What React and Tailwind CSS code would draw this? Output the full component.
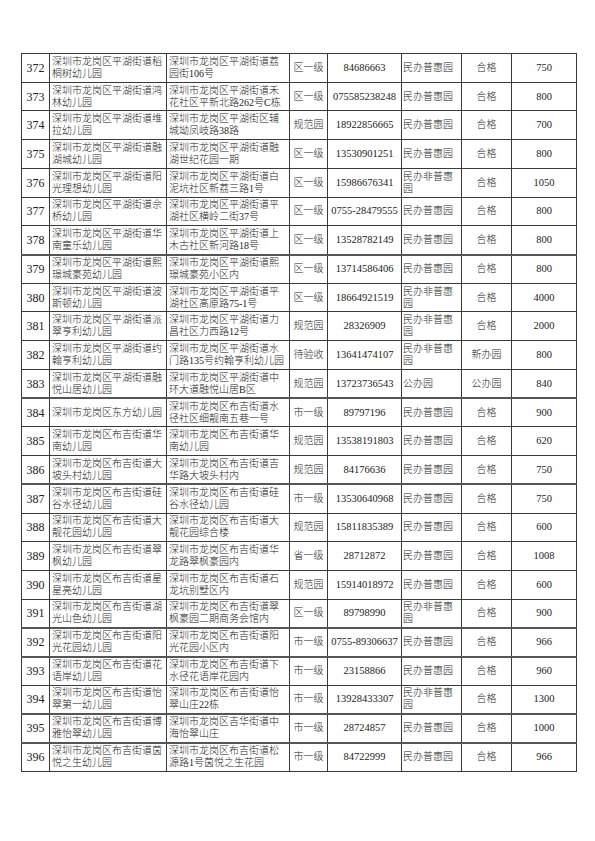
import React from "react";

const rows = [
  ["372", "深圳市龙岗区平湖街道稻桐树幼儿园", "深圳市龙岗区平湖街道荔园街106号", "区一级", "84686663", "民办普惠园", "合格", "750"],
  ["373", "深圳市龙岗区平湖街道鸿林幼儿园", "深圳市龙岗区平湖街道禾花社区平新北路262号C栋", "区一级", "075585238248", "民办普惠园", "合格", "800"],
  ["374", "深圳市龙岗区平湖街道维拉幼儿园", "深圳市龙岗区平湖街区辅城坳凤岐路38路", "规范园", "18922856665", "民办普惠园", "合格", "700"],
  ["375", "深圳市龙岗区平湖街道融湖城幼儿园", "深圳市龙岗区平湖街道融湖世纪花园一期", "区一级", "13530901251", "民办普惠园", "合格", "800"],
  ["376", "深圳市龙岗区平湖街道阳光理想幼儿园", "深圳市龙岗区平湖街道白泥坑社区新荔三路1号", "区一级", "15986676341", "民办非普惠园", "合格", "1050"],
  ["377", "深圳市龙岗区平湖街道佘桥幼儿园", "深圳市龙岗区平湖街道平湖社区横岭二街37号", "区一级", "0755-28479555", "民办普惠园", "合格", "800"],
  ["378", "深圳市龙岗区平湖街道华南童乐幼儿园", "深圳市龙岗区平湖街道上木古社区新河路18号", "区一级", "13528782149", "民办普惠园", "合格", "800"],
  ["379", "深圳市龙岗区平湖街道熙璟城豪苑幼儿园", "深圳市龙岗区平湖街道熙璟城豪苑小区内", "区一级", "13714586406", "民办普惠园", "合格", "800"],
  ["380", "深圳市龙岗区平湖街道波斯顿幼儿园", "深圳市龙岗区平湖街道平湖社区高原路75-1号", "区一级", "18664921519", "民办非普惠园", "合格", "4000"],
  ["381", "深圳市龙岗区平湖街道派翠亨利幼儿园", "深圳市龙岗区平湖街道力昌社区力西路12号", "规范园", "28326909", "民办非普惠园", "合格", "2000"],
  ["382", "深圳市龙岗区平湖街道约翰亨利幼儿园", "深圳市龙岗区平湖街道水门路135号约翰亨利幼儿园", "待验收", "13641474107", "民办非普惠园", "新办园", "800"],
  ["383", "深圳市龙岗区平湖街道融悦山居幼儿园", "深圳市龙岗区平湖街道中环大道融悦山居B区", "规范园", "13723736543", "公办园", "公办园", "840"],
  ["384", "深圳市龙岗区东方幼儿园", "深圳市龙岗区布吉街道水径社区细靓南五巷一号", "市一级", "89797196", "民办普惠园", "合格", "900"],
  ["385", "深圳市龙岗区布吉街道华南幼儿园", "深圳市龙岗区布吉街道华南幼儿园", "规范园", "13538191803", "民办普惠园", "合格", "620"],
  ["386", "深圳市龙岗区布吉街道大坡头村幼儿园", "深圳市龙岗区布吉街道吉华路大坡头村内", "规范园", "84176636", "民办普惠园", "合格", "750"],
  ["387", "深圳市龙岗区布吉街道硅谷水径幼儿园", "深圳市龙岗区布吉街道硅谷水径幼儿园", "市一级", "13530640968", "民办普惠园", "合格", "750"],
  ["388", "深圳市龙岗区布吉街道大靓花园幼儿园", "深圳市龙岗区布吉街道大靓花园综合楼", "规范园", "15811835389", "民办普惠园", "合格", "600"],
  ["389", "深圳市龙岗区布吉街道翠枫幼儿园", "深圳市龙岗区布吉街道华龙路翠枫豪园内", "省一级", "28712872", "民办普惠园", "合格", "1008"],
  ["390", "深圳市龙岗区布吉街道星星亮幼儿园", "深圳市龙岗区布吉街道石龙坑别墅区内", "规范园", "15914018972", "民办普惠园", "合格", "600"],
  ["391", "深圳市龙岗区布吉街道湖光山色幼儿园", "深圳市龙岗区布吉街道翠枫豪园二期商务会馆内", "区一级", "89798990", "民办非普惠园", "合格", "900"],
  ["392", "深圳市龙岗区布吉街道阳光花园幼儿园", "深圳市龙岗区布吉街道阳光花园小区内", "市一级", "0755-89306637", "民办普惠园", "合格", "966"],
  ["393", "深圳市龙岗区布吉街道花语岸幼儿园", "深圳市龙岗区布吉街道下水径花语岸花园内", "市一级", "23158866", "民办普惠园", "合格", "960"],
  ["394", "深圳市龙岗区布吉街道怡翠第一幼儿园", "深圳市龙岗区布吉街道怡翠山庄22栋", "市一级", "13928433307", "民办非普惠园", "合格", "1300"],
  ["395", "深圳市龙岗区布吉街道博雅怡翠幼儿园", "深圳市龙岗区吉华街道中海怡翠山庄", "市一级", "28724857", "民办普惠园", "合格", "1000"],
  ["396", "深圳市龙岗区布吉街道茵悦之生幼儿园", "深圳市龙岗区布吉街道松源路1号茵悦之生花园", "市一级", "84722999", "民办普惠园", "合格", "966"],
];

// rows whose bottom line looks heavier in the scan
const heavy = ["378", "383", "386", "391", "392", "394", "395"];

export default function App() {
  return (
    <div
      className="w-[595px] h-[841px] bg-white pt-[53px] pl-[21px] text-[#222] font-light"
      style={{ fontFamily: '"Liberation Serif", "Noto Sans CJK SC", serif' }}
    >
      <table className="table-fixed border-collapse w-[555px]">
        <colgroup>
          <col className="w-[28px]" />
          <col className="w-[117px]" />
          <col className="w-[123px]" />
          <col className="w-[38px]" />
          <col className="w-[74px]" />
          <col className="w-[60px]" />
          <col className="w-[50px]" />
          <col className="w-[65px]" />
        </colgroup>
        <tbody>
          {rows.map((r, i) => (
            <tr
              key={i}
              className={`h-[28.72px] ${
                heavy.includes(r[0]) ? "border-b-2 border-b-[#555]" : ""
              }`}
            >
              <td className="border border-[#3a3a3a] text-center text-[12px] leading-none">
                {r[0]}
              </td>
              <td className="border border-[#3a3a3a] px-[2px] text-[10px] leading-[12px] break-all">
                {r[1]}
              </td>
              <td className="border border-[#3a3a3a] px-[2px] text-[10px] leading-[12px] break-all">
                {r[2]}
              </td>
              <td className="border border-[#3a3a3a] text-center text-[10px] leading-[12px]">
                {r[3]}
              </td>
              <td className="border border-[#3a3a3a] text-center text-[10.5px] leading-[12px] whitespace-nowrap">
                {r[4]}
              </td>
              <td className="border border-[#3a3a3a] pl-[1px] pr-[4px] text-[10px] leading-[12px] break-all">
                {r[5]}
              </td>
              <td className="border border-[#3a3a3a] text-center text-[10px] leading-[12px]">
                {r[6]}
              </td>
              <td className="border border-[#3a3a3a] text-center text-[10.5px] leading-[12px]">
                {r[7]}
              </td>
            </tr>
          ))}
        </tbody>
      </table>
    </div>
  );
}
